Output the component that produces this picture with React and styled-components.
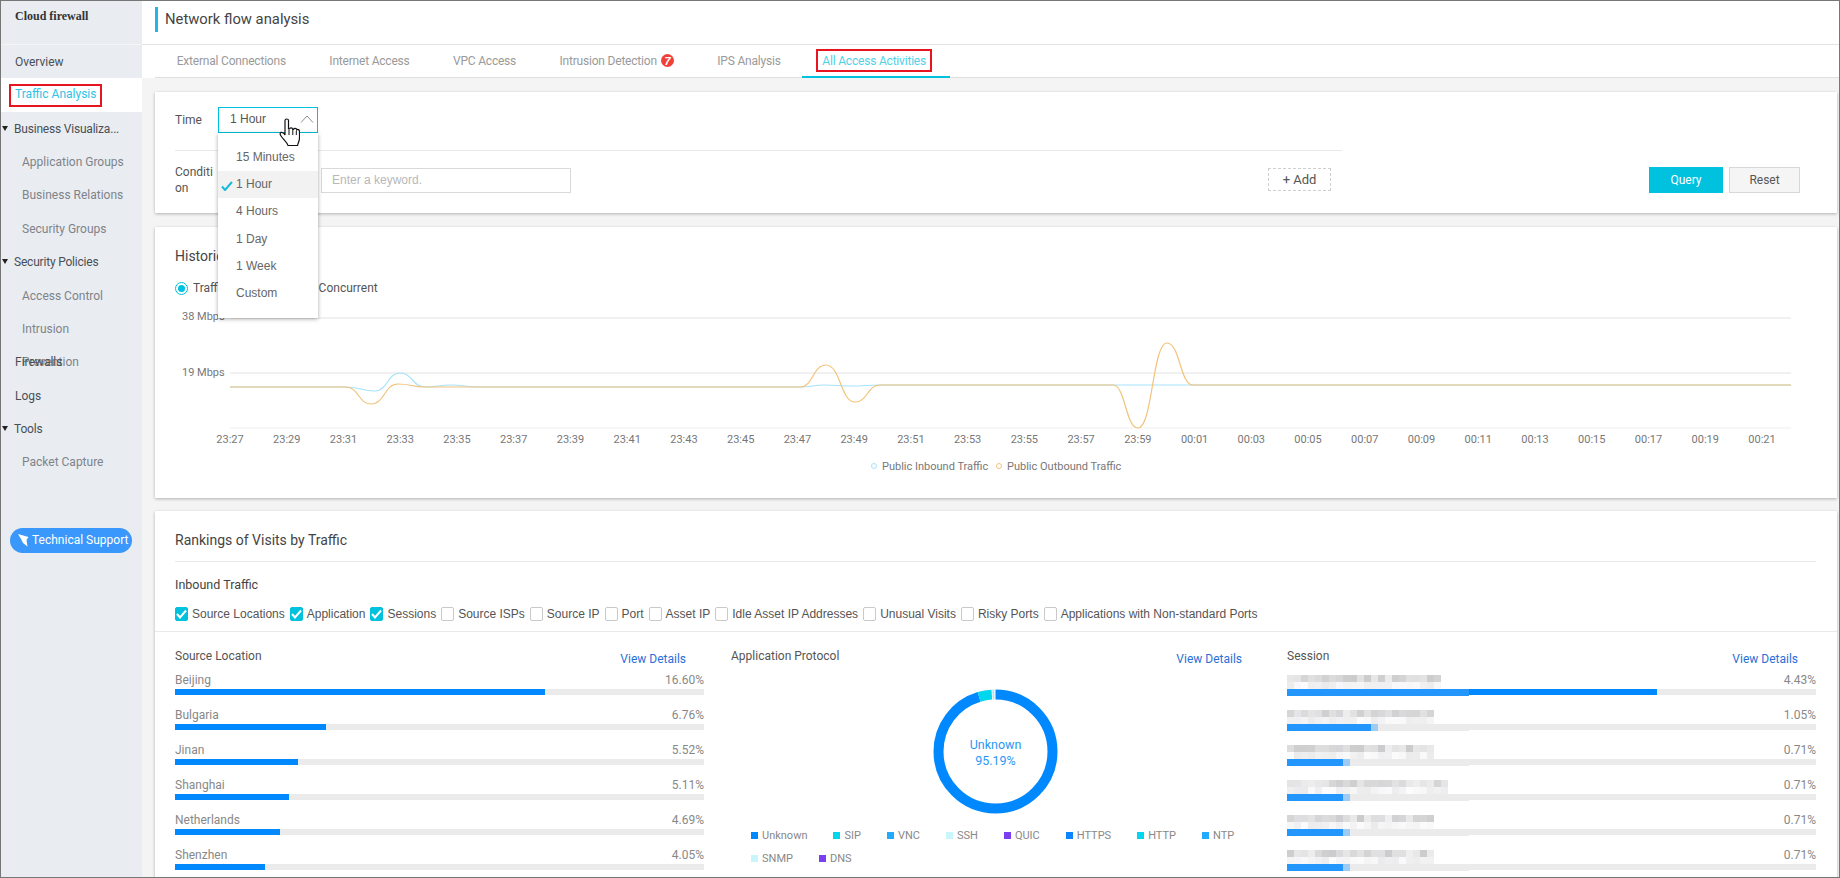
import styled, { createGlobalStyle } from "styled-components";

const SANS = `Roboto, "Noto Sans", sans-serif`;
const ARIAL = `"Liberation Sans", Arial, sans-serif`;

const GlobalStyle = createGlobalStyle`
  html, body {
    margin: 0;
    padding: 0;
    background: #fff;
  }
  body {
    font-family: ${SANS};
    font-size: 12px;
    color: #555;
  }
  * {
    box-sizing: border-box;
  }
`;

const Frame = styled.div`
  display: flex;
  width: 1840px;
  height: 878px;
  border: 1px solid #777;
  overflow: hidden;
`;

/* sidebar */
const Sidebar = styled.aside`
  flex: none;
  width: 141px;
  background: #e9edf2;
`;

const Brand = styled.div`
  height: 44px;
  padding: 7px 0 0 14px;
  border-bottom: 1px solid #f4f5f7;
  font-family: "Liberation Serif", serif;
  font-weight: 700;
  font-size: 12px;
  line-height: 16px;
  color: #333;
`;

const NavItem = styled.div`
  display: flex;
  align-items: center;
  height: 33.36px;
  line-height: 33.36px;
  padding-top: 2px;
  padding-left: ${(props) => (props.$sub ? "21px" : props.$group ? "1px" : "14px")};
  background: ${(props) => (props.$active ? "#fff" : "transparent")};
  color: ${(props) => (props.$sub ? "#7f8389" : "#4a4f55")};
  letter-spacing: ${(props) => (props.$group ? "-0.2px" : "0")};
  white-space: nowrap;
`;

const Caret = styled.span`
  width: 0;
  height: 0;
  margin: -2px 6px 0 0;
  border-left: 3.5px solid transparent;
  border-right: 3.5px solid transparent;
  border-top: 5px solid #222;
`;

const RedBox = styled.span`
  display: inline-flex;
  align-items: center;
  height: 23px;
  padding: 0 4px;
  border: 2px solid #e8141f;
  color: ${(props) => props.$color || "inherit"};
  margin-left: ${(props) => props.$shift || "0"};
  margin-top: ${(props) => props.$up || "0"};
`;

const TwoLines = styled.span`
  display: block;
  height: 33.36px;
  overflow: visible;
`;

const SupportButton = styled.div`
  display: flex;
  align-items: center;
  gap: 3px;
  width: 122px;
  height: 25px;
  margin: 49px 0 0 9px;
  padding-left: 8px;
  border-radius: 13px;
  background: #3a97fb;
  color: #fff;
  font-size: 12px;
  white-space: nowrap;

  svg {
    flex: none;
  }
`;

/* main column */
const Main = styled.main`
  flex: 1;
  min-width: 0;
  display: flex;
  flex-direction: column;
`;

const TitleBar = styled.header`
  flex: none;
  display: flex;
  align-items: center;
  height: 44px;
  padding-left: 13px;
  border-bottom: 1px solid #e4e4e4;
  padding-bottom: 6px;
`;

const TitleText = styled.h1`
  margin: 0;
  padding-left: 7px;
  border-left: 3px solid #1fb6ea;
  font-size: 14.8px;
  font-weight: 400;
  line-height: 25px;
  color: #444;
`;

const TabsWrap = styled.div`
  flex: none;
  padding-left: 13px;
`;

const Tabs = styled.nav`
  display: flex;
  height: 33px;
  border-bottom: 1px solid #dfdfdf;
`;

const Tab = styled.div`
  position: relative;
  display: flex;
  align-items: center;
  height: 33px;
  padding: ${(props) => (props.$active ? "0 18px 0 22px" : "0 21.7px")};
  color: ${(props) => (props.$active ? "#4fd2e8" : "#9a9a9a")};
  border-bottom: 2px solid ${(props) => (props.$active ? "#00c1de" : "transparent")};
  letter-spacing: -0.2px;
  white-space: nowrap;
`;

const Badge = styled.span`
  display: inline-flex;
  align-items: center;
  justify-content: center;
  width: 13px;
  height: 13px;
  margin-left: 4px;
  border-radius: 50%;
  background: #f0403a;
  color: #fff;
  font-family: ${ARIAL};
  font-weight: 700;
  font-style: italic;
  font-size: 11px;
`;

const Content = styled.div`
  flex: 1;
  min-height: 0;
  display: flex;
  flex-direction: column;
  padding: 14px 2px 0 13px;
  background: #f4f4f4;
  overflow: hidden;
`;

const Card = styled.section`
  flex: none;
  height: ${(props) => props.$height || "auto"};
  margin-bottom: ${(props) => props.$gap || "14px"};
  background: #fff;
  box-shadow: 0 1px 3px rgba(0, 0, 0, 0.28);
  padding-left: 20px;
`;

/* query card */
const TimeRow = styled.div`
  display: flex;
  align-items: flex-start;
  height: 41px;
  padding-top: 15px;
`;

const FieldLabel = styled.span`
  width: 43px;
  margin-top: ${(props) => props.$top || "0"};
  color: #555;
  font-size: 12px;
  line-height: 16px;
  word-break: break-all;
`;

const SelectWrap = styled.div`
  position: relative;
  width: 100px;
  height: 26px;
`;

const SelectBox = styled.div`
  display: flex;
  align-items: center;
  justify-content: space-between;
  height: 26px;
  padding: 0 3px 2px 11px;
  border: 1px solid #00c1de;
  font-family: ${ARIAL};
  color: #555;
`;

const Menu = styled.ul`
  position: absolute;
  z-index: 5;
  top: 26px;
  left: 0;
  width: 100px;
  height: 185px;
  margin: 0;
  padding: 11px 0 0;
  list-style: none;
  background: #fff;
  box-shadow: 0 1px 4px rgba(0, 0, 0, 0.35);
  font-family: ${ARIAL};
  color: #666;
`;

const MenuItem = styled.li`
  position: relative;
  height: 27.2px;
  line-height: 27.2px;
  padding-left: 18px;
  background: ${(props) => (props.$selected ? "#f2f2f2" : "transparent")};
`;

const CheckMark = styled.svg`
  position: absolute;
  left: 3px;
  top: 10px;
`;

const HandCursor = styled.svg`
  position: absolute;
  z-index: 6;
  left: 61px;
  top: 11px;
`;

const Rule = styled.div`
  width: ${(props) => props.$width || "100%"};
  height: 1px;
  margin-top: ${(props) => props.$top || "0"};
  background: #e9e9e9;
`;

const ConditionRow = styled.div`
  display: flex;
  align-items: flex-start;
  padding-top: 16px;
  padding-right: 37px;
`;

const KeywordInput = styled.div`
  width: 250px;
  height: 25px;
  margin: 1px 0 0 103px;
  padding-left: 10px;
  border: 1px solid #d9d9d9;
  font-family: ${ARIAL};
  line-height: 23px;
  color: #b8b8b8;
`;

const AddButton = styled.div`
  width: 63px;
  height: 23px;
  margin: 1px 0 0 697px;
  border: 1px dashed #cfcfcf;
  font-size: 13px;
  line-height: 21px;
  text-align: center;
  color: #555;
`;

const Actions = styled.div`
  display: flex;
  gap: 6px;
  margin-left: auto;
`;

const ActionButton = styled.div`
  width: ${(props) => (props.$primary ? "74px" : "71px")};
  height: 26px;
  line-height: 24px;
  text-align: center;
  background: ${(props) => (props.$primary ? "#00c1de" : "#f5f5f5")};
  border: 1px solid ${(props) => (props.$primary ? "#00c1de" : "#d7d7d7")};
  color: ${(props) => (props.$primary ? "#fff" : "#555")};
`;

/* chart card */
const CardTitle = styled.h2`
  margin: 0;
  padding-top: 19px;
  font-size: 14px;
  font-weight: 400;
  line-height: 20px;
  color: #444;
`;

const RadioRow = styled.div`
  display: flex;
  align-items: center;
  height: 18px;
  margin-top: 13px;
  color: #555;
`;

const Radio = styled.span`
  display: inline-flex;
  align-items: center;
  justify-content: center;
  width: 13px;
  height: 13px;
  margin-right: 5px;
  border: 1px solid #00c1de;
  border-radius: 50%;

  &::after {
    content: "";
    width: 7px;
    height: 7px;
    border-radius: 50%;
    background: #00c1de;
  }
`;

const RadioHidden = styled.span`
  margin-left: ${(props) => props.$left};
`;

const ChartSvg = styled.svg`
  display: block;
  margin-top: 8px;
`;

const AxisText = styled.text`
  font-family: ${SANS};
  font-size: 11px;
  fill: #777;
`;

/* rankings card */
const SubTitle = styled.div`
  margin-top: 14px;
  height: 18px;
  font-size: 12.5px;
  line-height: 18px;
  color: #444;
`;

const CheckRow = styled.div`
  display: flex;
  align-items: center;
  height: 18px;
  margin-top: 11px;
  margin-bottom: 8px;
  font-family: ${ARIAL};
  color: #555;
`;

const CheckItem = styled.label`
  display: flex;
  align-items: center;
  gap: 4px;
  margin-right: 5px;
  white-space: nowrap;
`;

const Box = styled.span`
  display: inline-flex;
  align-items: center;
  justify-content: center;
  width: 13px;
  height: 14px;
  border-radius: 2px;
  border: 1px solid ${(props) => (props.$on ? "#00c1de" : "#c9c9c9")};
  background: ${(props) => (props.$on ? "#00c1de" : "#fff")};
`;

const FullRule = styled.div`
  height: 1px;
  margin-left: -20px;
  background: #e9e9e9;
`;

const Columns = styled.div`
  display: grid;
  grid-template-columns: 529px 529px 529px;
  column-gap: 27px;
`;

const ColHead = styled.div`
  display: flex;
  justify-content: space-between;
  height: 24px;
  margin-top: 15px;
  padding-right: 18px;
  line-height: 18px;
  color: #555;
`;

const DetailLink = styled.a`
  margin-top: 3px;
  color: #2a6fd8;
`;

const RankRow = styled.div`
  position: relative;
  height: 35px;
`;

const RankLine = styled.div`
  display: flex;
  justify-content: space-between;
  height: 18px;
  line-height: 18px;
  color: #888;
`;

const Track = styled.div`
  height: 6px;
  background: #ebebeb;
`;

const Fill = styled.div`
  height: 6px;
  background: #0088ff;
`;

const Mosaic = styled.svg`
  position: absolute;
  left: 0;
  top: 4px;
`;

const Donut = styled.svg`
  display: block;
  margin: 18px auto 0;
`;

const DonutText = styled.text`
  font-family: ${SANS};
  font-size: 12.5px;
  fill: #2b97f5;
  text-anchor: middle;
`;

const Legend = styled.div`
  display: flex;
  flex-wrap: wrap;
  margin: 10px -12px 0 0;
  padding-left: 20px;
`;

const LegendItem = styled.div`
  display: flex;
  align-items: center;
  gap: 4px;
  height: 23px;
  margin-right: 26px;
  color: #888;
  font-size: 11px;
`;

const Swatch = styled.span`
  width: 7px;
  height: 7px;
  background: ${(props) => props.$color};
`;

const MENU = ["15 Minutes", "1 Hour", "4 Hours", "1 Day", "1 Week", "Custom"];

const TIMES = [
  "23:27", "23:29", "23:31", "23:33", "23:35", "23:37", "23:39", "23:41", "23:43", "23:45",
  "23:47", "23:49", "23:51", "23:53", "23:55", "23:57", "23:59", "00:01", "00:03", "00:05",
  "00:07", "00:09", "00:11", "00:13", "00:15", "00:17", "00:19", "00:21",
];

const INBOUND = [
  [230, 387], [346, 387], [375, 391], [400, 373], [425, 387], [451, 385], [478, 387],
  [800, 387], [825, 385], [852, 386], [880, 385], [1791, 385],
];

const OUTBOUND = [
  [230, 387], [346, 387], [371, 404], [398, 384], [425, 387], [800, 387], [826, 365],
  [855, 402], [880, 385], [1113, 385], [1138, 428], [1167, 343], [1193, 385], [1791, 385],
];

const FILTERS = [
  ["Source Locations", true],
  ["Application", true],
  ["Sessions", true],
  ["Source ISPs"],
  ["Source IP"],
  ["Port"],
  ["Asset IP"],
  ["Idle Asset IP Addresses"],
  ["Unusual Visits"],
  ["Risky Ports"],
  ["Applications with Non-standard Ports"],
];

const LOCATIONS = [
  ["Beijing", "16.60%", 370],
  ["Bulgaria", "6.76%", 151],
  ["Jinan", "5.52%", 123],
  ["Shanghai", "5.11%", 114],
  ["Netherlands", "4.69%", 105],
  ["Shenzhen", "4.05%", 90],
];

const SESSIONS = [
  ["4.43%", 370, 22, 26],
  ["1.05%", 151, 21, 12],
  ["0.71%", 105, 21, 8],
  ["0.71%", 105, 23, 8],
  ["0.71%", 105, 21, 8],
  ["0.71%", 105, 21, 8],
];

const PROTOCOLS = [
  ["Unknown", "#0088ff"],
  ["SIP", "#00d6ee"],
  ["VNC", "#22aaff"],
  ["SSH", "#c9f6fb"],
  ["QUIC", "#7a3ff0"],
  ["HTTPS", "#0a84ff"],
  ["HTTP", "#00d6ee"],
  ["NTP", "#22aaff"],
  ["SNMP", "#c9f6fb"],
  ["DNS", "#7a3ff0"],
];

// curve through turning points, flat tangent at each one
function curve(points) {
  let d = `M${points[0][0]} ${points[0][1]}`;
  for (let i = 1; i < points.length; i++) {
    const [x0, y0] = points[i - 1];
    const [x1, y1] = points[i];
    const mid = (x0 + x1) / 2;
    d += ` C${mid} ${y0} ${mid} ${y1} ${x1} ${y1}`;
  }
  return d;
}

function shade(seed, col, base, spread) {
  const n = (Math.sin(seed * 12.9 + col * 78.2) * 43758.5) % 1;
  const v = Math.round(base + Math.abs(n) * spread);
  return `rgb(${v},${v},${Math.min(255, v + (col % 3 === 1 ? 3 : 0))})`;
}

function BlurredRow({ seed, cols, blue }) {
  const cells = [];
  for (let c = 0; c < cols; c++) {
    cells.push(<rect key={`a${c}`} x={c * 7} y="0" width="7" height="7" fill={shade(seed, c, 203, 36)} />);
    cells.push(<rect key={`b${c}`} x={c * 7} y="7" width="7" height="7" fill={shade(seed + 9, c, 234, 18)} />);
  }
  for (let c = 0; c < 26; c++) {
    let fill = "#ebebeb";
    if (c < blue) fill = "#2396fd";
    else if (c === blue) fill = "#9ccbf6";
    cells.push(<rect key={`c${c}`} x={c * 7} y="14" width="7" height="7" fill={fill} />);
  }
  return (
    <Mosaic width="182" height="21" viewBox="0 0 182 21">
      {cells}
    </Mosaic>
  );
}

function HistoryChart() {
  return (
    <ChartSvg width="1661" height="172" viewBox="175 305 1661 172">
      {[318, 373, 428].map((y) => (
        <line key={y} x1="230" x2="1791" y1={y} y2={y} stroke={y === 428 ? "#efefef" : "#e2e2e2"} strokeWidth="1" />
      ))}
      <AxisText x="182" y="320">38 Mbps</AxisText>
      <AxisText x="182" y="376">19 Mbps</AxisText>
      {TIMES.map((t, i) => (
        <AxisText key={t} x={230 + i * 56.74} y="443" textAnchor="middle">
          {t}
        </AxisText>
      ))}
      <path d={curve(INBOUND)} fill="none" stroke="#a6e2fb" strokeWidth="1.2" />
      <path d={curve(OUTBOUND)} fill="none" stroke="#f2c27a" strokeWidth="1.2" />
      <circle cx="874" cy="466" r="2.5" fill="#fff" stroke="#a6e2fb" />
      <AxisText x="882" y="470">Public Inbound Traffic</AxisText>
      <circle cx="999" cy="466" r="2.5" fill="#fff" stroke="#f2c27a" />
      <AxisText x="1007" y="470">Public Outbound Traffic</AxisText>
    </ChartSvg>
  );
}

function ProtocolDonut() {
  const c = 2 * Math.PI * 57;
  return (
    <Donut width="125" height="125" viewBox="0 0 125 125">
      <g fill="none" strokeWidth="10" transform="rotate(-90 62.5 62.5)">
        <circle cx="62.5" cy="62.5" r="57" stroke="#0088ff" strokeDasharray={`${c * 0.9519} ${c}`} />
        <circle cx="62.5" cy="62.5" r="57" stroke="#00d6ee" strokeDasharray={`${c * 0.036} ${c}`} strokeDashoffset={-c * 0.9519} />
        <circle cx="62.5" cy="62.5" r="57" stroke="#a8e4ff" strokeDasharray={`${c * 0.005} ${c}`} strokeDashoffset={-c * 0.99} />
      </g>
      <DonutText x="62.5" y="60">Unknown</DonutText>
      <DonutText x="62.5" y="76">95.19%</DonutText>
    </Donut>
  );
}

function App() {
  return (
    <>
      <GlobalStyle />
      <Frame>
        <Sidebar>
          <Brand>Cloud firewall</Brand>
          <NavItem>Overview</NavItem>
          <NavItem $active>
            <RedBox $color="#2dc3e8" $shift="-6px" $up="-2px">Traffic Analysis</RedBox>
          </NavItem>
          <NavItem $group><Caret />Business Visualiza...</NavItem>
          <NavItem $sub>Application Groups</NavItem>
          <NavItem $sub>Business Relations</NavItem>
          <NavItem $sub>Security Groups</NavItem>
          <NavItem $group><Caret />Security Policies</NavItem>
          <NavItem $sub>Access Control</NavItem>
          <NavItem $sub>
            <TwoLines>Intrusion<br />Prevention</TwoLines>
          </NavItem>
          <NavItem>Firewalls</NavItem>
          <NavItem>Logs</NavItem>
          <NavItem $group><Caret />Tools</NavItem>
          <NavItem $sub>Packet Capture</NavItem>
          <SupportButton>
            <svg width="11" height="13" viewBox="0 0 11 13">
              <path d="M0 0 L10.5 3 L8.5 6 L9.5 12.5 L5 9 L3 5 Z" fill="#fff" />
            </svg>
            Technical Support
          </SupportButton>
        </Sidebar>
        <Main>
          <TitleBar>
            <TitleText>Network flow analysis</TitleText>
          </TitleBar>
          <TabsWrap>
            <Tabs>
              <Tab>External Connections</Tab>
              <Tab>Internet Access</Tab>
              <Tab>VPC Access</Tab>
              <Tab>Intrusion Detection<Badge>7</Badge></Tab>
              <Tab>IPS Analysis</Tab>
              <Tab $active>
                <RedBox $shift="-8px">All Access Activities</RedBox>
              </Tab>
            </Tabs>
          </TabsWrap>
          <Content>
            <Card $height="121px">
              <TimeRow>
                <FieldLabel $top="5px">Time</FieldLabel>
                <SelectWrap>
                  <SelectBox>
                    1 Hour
                    <svg width="14" height="8" viewBox="0 0 14 8">
                      <polyline points="1,7.5 7,1 13,7.5" fill="none" stroke="#8f8f8f" strokeWidth="1" />
                    </svg>
                  </SelectBox>
                  <Menu>
                    {MENU.map((m) => (
                      <MenuItem key={m} $selected={m === "1 Hour"}>
                        {m === "1 Hour" && (
                          <CheckMark width="12" height="10" viewBox="0 0 12 10">
                            <path d="M1 5.5 L4 9 L11 1" fill="none" stroke="#17b9dc" strokeWidth="2" />
                          </CheckMark>
                        )}
                        {m}
                      </MenuItem>
                    ))}
                  </Menu>
                  <HandCursor width="21" height="28" viewBox="0 0 21 28">
                    <path
                      d="M6 2.5 C6 0.5 9.5 0.5 9.5 2.5 V11 H10.5 C10.8 9.5 13.5 9.5 13.8 11.5 H14.5 C15 10 17.5 10 17.8 12 C18.5 11 20.5 11.5 20.5 13.5 V20 C20.5 23 19 25 18.5 27.5 H9 C8.5 25 5 22 2 18 C0.5 16 1 14 3 14.5 C4.5 15 5.5 16 6 17 Z"
                      fill="#fff"
                      stroke="#111"
                      strokeWidth="1.2"
                    />
                    <path d="M10 12 V17 M13.8 12 V17 M17.3 13 V17" stroke="#111" strokeWidth="1" />
                  </HandCursor>
                </SelectWrap>
              </TimeRow>
              <Rule $width="1167px" $top="17px" />
              <ConditionRow>
                <FieldLabel $top="-3px">Condition</FieldLabel>
                <KeywordInput>Enter a keyword.</KeywordInput>
                <AddButton>+ Add</AddButton>
                <Actions>
                  <ActionButton $primary>Query</ActionButton>
                  <ActionButton>Reset</ActionButton>
                </Actions>
              </ConditionRow>
            </Card>
            <Card $height="271px" $gap="13px">
              <CardTitle>Historical Traffic</CardTitle>
              <RadioRow>
                <Radio />
                Traffic
                <RadioHidden $left="92px">Concurrent</RadioHidden>
              </RadioRow>
              <HistoryChart />
            </Card>
            <Card>
              <CardTitle>Rankings of Visits by Traffic</CardTitle>
              <Rule $width="1641px" $top="11px" />
              <SubTitle>Inbound Traffic</SubTitle>
              <CheckRow>
                {FILTERS.map(([label, on]) => (
                  <CheckItem key={label}>
                    <Box $on={on}>
                      {on && (
                        <svg width="11" height="10" viewBox="0 0 11 10">
                          <path d="M1 5 L4 8.5 L10 1.5" fill="none" stroke="#fff" strokeWidth="2" />
                        </svg>
                      )}
                    </Box>
                    {label}
                  </CheckItem>
                ))}
              </CheckRow>
              <FullRule />
              <Columns>
                <div>
                  <ColHead>
                    <span>Source Location</span>
                    <DetailLink>View Details</DetailLink>
                  </ColHead>
                  {LOCATIONS.map(([name, pct, w]) => (
                    <RankRow key={name}>
                      <RankLine>
                        <span>{name}</span>
                        <span>{pct}</span>
                      </RankLine>
                      <Track>
                        <Fill style={{ width: w }} />
                      </Track>
                    </RankRow>
                  ))}
                </div>
                <div>
                  <ColHead>
                    <span>Application Protocol</span>
                    <DetailLink>View Details</DetailLink>
                  </ColHead>
                  <ProtocolDonut />
                  <Legend>
                    {PROTOCOLS.map(([name, color]) => (
                      <LegendItem key={name}>
                        <Swatch $color={color} />
                        {name}
                      </LegendItem>
                    ))}
                  </Legend>
                </div>
                <div>
                  <ColHead>
                    <span>Session</span>
                    <DetailLink>View Details</DetailLink>
                  </ColHead>
                  {SESSIONS.map(([pct, w, cols, blue], i) => (
                    <RankRow key={i}>
                      <RankLine>
                        <span />
                        <span>{pct}</span>
                      </RankLine>
                      <Track>
                        <Fill style={{ width: w }} />
                      </Track>
                      <BlurredRow seed={i + 1} cols={cols} blue={blue} />
                    </RankRow>
                  ))}
                </div>
              </Columns>
            </Card>
          </Content>
        </Main>
      </Frame>
    </>
  );
}

export default App;
